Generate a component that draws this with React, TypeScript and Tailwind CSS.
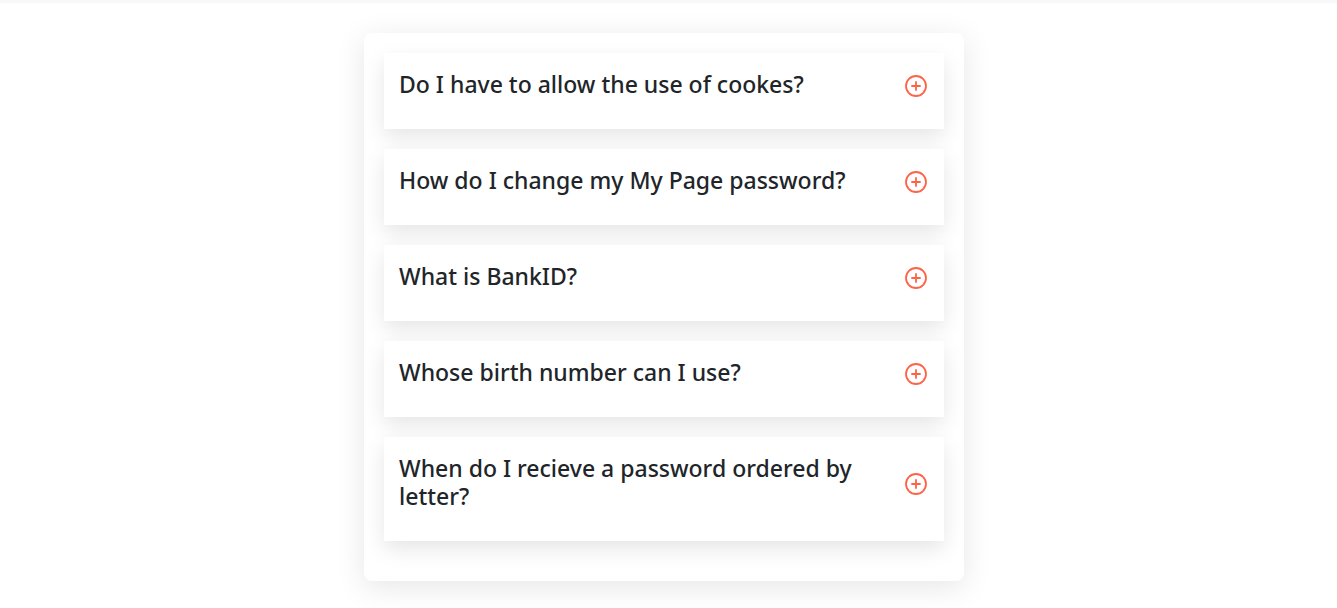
import React from 'react';
import { CirclePlus } from 'lucide-react';

const questions = [
  'Do I have to allow the use of cookes?',
  'How do I change my My Page password?',
  'What is BankID?',
  'Whose birth number can I use?',
  'When do I recieve a password ordered by letter?',
];

export default function App() {
  return (
    <div className="min-h-[608px] bg-white font-['Noto_Sans',sans-serif]">
      <div className="h-[3px] bg-[#f7f8fa]" />
      <div className="flex justify-center pt-[30px] pr-[9px]">
        <div className="w-[600px] rounded-lg bg-white px-5 pt-5 pb-10 shadow-[0_6px_30px_rgba(0,0,0,0.1)] flex flex-col gap-5">
          {questions.map((q) => (
            <div key={q} className="bg-white pb-[10px] shadow-[0_8px_20px_rgba(0,0,0,0.1)]">
              <button className="flex w-full items-center justify-between gap-6 pl-[15px] pr-4 py-[17px] text-left">
                <span className="pb-1 text-[23px] leading-[28px] font-medium text-[#212529] max-w-[470px]">{q}</span>
                <CirclePlus className="h-6 w-6 shrink-0 text-[#ff6347]" strokeWidth={1.8} />
              </button>
            </div>
          ))}
        </div>
      </div>
    </div>
  );
}
